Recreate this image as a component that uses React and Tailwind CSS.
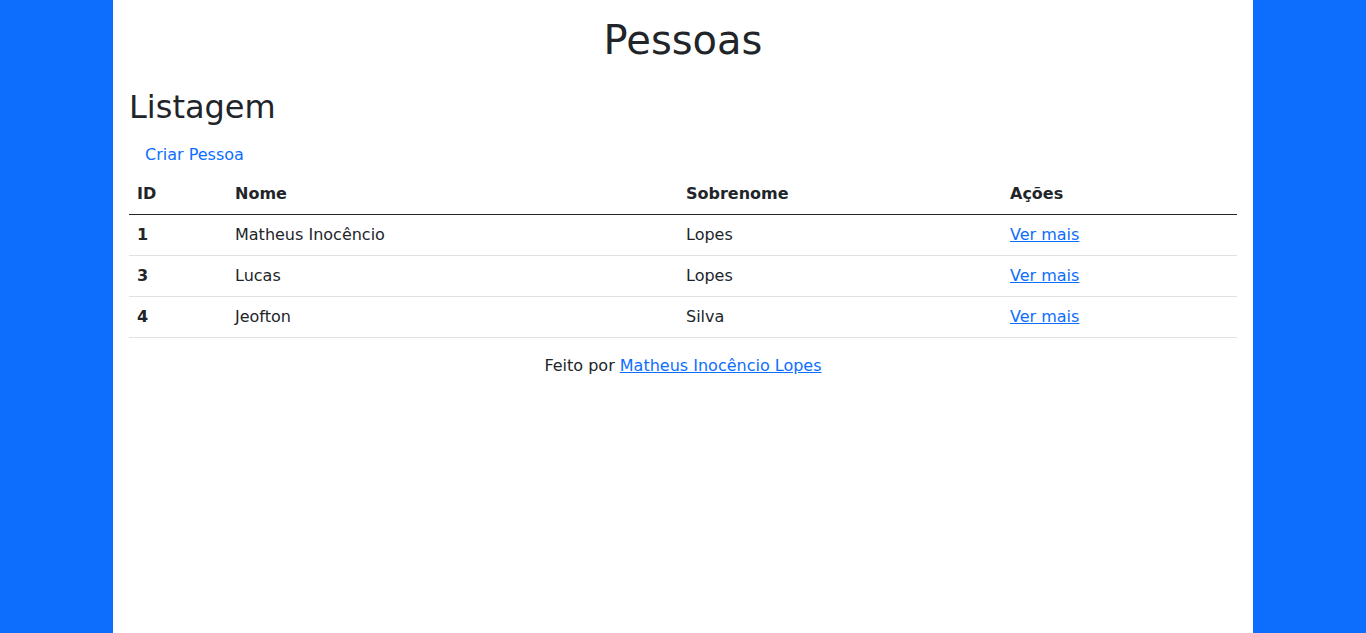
import React from 'react';

const pessoas = [
  { id: 1, nome: 'Matheus Inocêncio', sobrenome: 'Lopes' },
  { id: 3, nome: 'Lucas', sobrenome: 'Lopes' },
  { id: 4, nome: 'Jeofton', sobrenome: 'Silva' },
];

export default function App() {
  return (
    <div
      className="min-h-screen bg-[#0d6efd] text-[#212529]"
      style={{ fontFamily: '"DejaVu Sans", sans-serif' }}
    >
      <div className="mx-auto w-[1140px] min-h-screen bg-white px-4 pt-4">
        <h1 className="text-center text-[40px] leading-[48px] font-normal mb-6">Pessoas</h1>
        <h2 className="text-[32px] leading-[38px] font-normal mb-[10px]">Listagem</h2>
        <a href="#" className="inline-block ml-1 px-3 py-[7px] text-base leading-6 text-[#0d6efd]">
          Criar Pessoa
        </a>
        <table className="w-full border-collapse text-base leading-6 mb-4">
          <colgroup>
            <col className="w-[98px]" />
            <col className="w-[451px]" />
            <col className="w-[324px]" />
            <col />
          </colgroup>
          <thead>
            <tr className="border-b border-[#212529]">
              <th className="text-left font-bold p-2">ID</th>
              <th className="text-left font-bold p-2">Nome</th>
              <th className="text-left font-bold p-2">Sobrenome</th>
              <th className="text-left font-bold p-2">Ações</th>
            </tr>
          </thead>
          <tbody>
            {pessoas.map((p) => (
              <tr key={p.id} className="border-b border-[#dee2e6]">
                <th className="text-left font-bold p-2">{p.id}</th>
                <td className="p-2">{p.nome}</td>
                <td className="p-2">{p.sobrenome}</td>
                <td className="p-2">
                  <a href="#" className="text-[#0d6efd] underline">Ver mais</a>
                </td>
              </tr>
            ))}
          </tbody>
        </table>
        <p className="text-center text-base leading-6">
          Feito por <a href="#" className="text-[#0d6efd] underline">Matheus Inocêncio Lopes</a>
        </p>
      </div>
    </div>
  );
}
